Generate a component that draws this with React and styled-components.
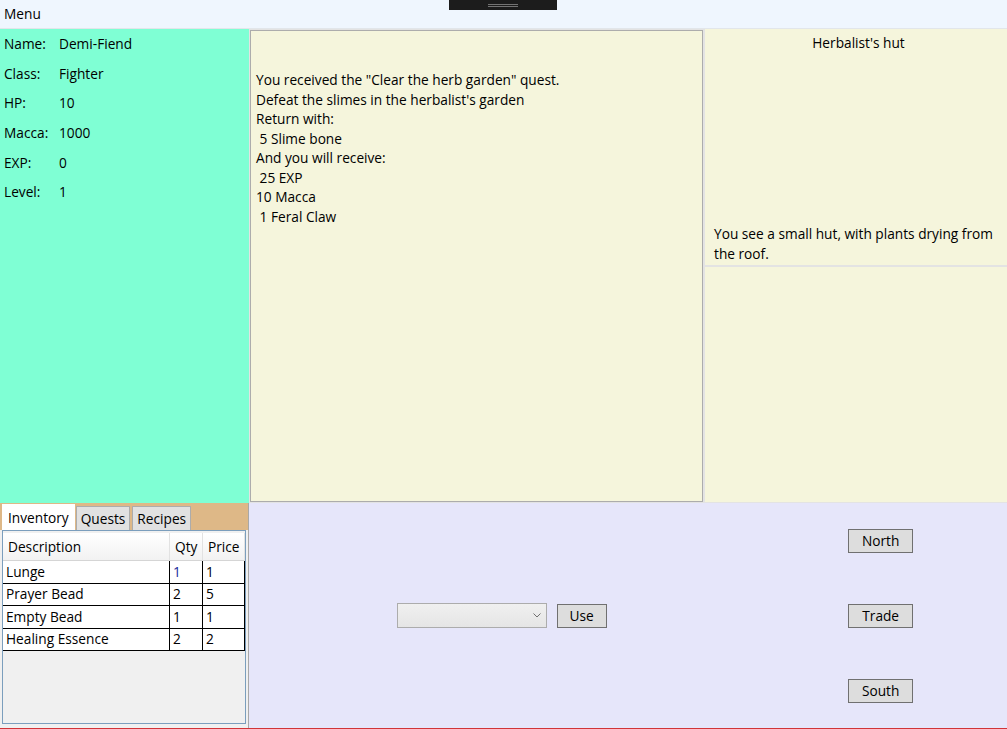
import React from "react";
import styled, { createGlobalStyle } from "styled-components";

const Global = createGlobalStyle`
  html, body { margin: 0; padding: 0; }
  body {
    font-family: "Open Sans", "Noto Sans", sans-serif;
    font-size: 13.7px;
    color: #000;
    background: #fff;
  }
  * { box-sizing: border-box; }
`;

const Window = styled.div`
  position: relative;
  width: 1007px;
  height: 729px;
  display: grid;
  grid-template-rows: 29px 474px 1fr;
  border-bottom: 1px solid #d13438;
  overflow: hidden;
`;

const Handle = styled.div`
  position: absolute;
  left: 449px;
  top: 0;
  width: 108px;
  height: 10px;
  background: #1c1c1c;
  display: flex;
  flex-direction: column;
  align-items: center;
  justify-content: center;
  gap: 1px;
  padding-top: 1px;
`;

const HandleLine = styled.div`
  width: 30px;
  height: 1px;
  background: #737373;
`;

const MenuBar = styled.div`
  background: #eff6fe;
  border-bottom: 1px solid #e2e6ea;
  padding: 4px 4px 0;
  line-height: 20px;
`;

const Main = styled.div`
  display: grid;
  grid-template-columns: 249px 456px 1fr;
  background: #e3e3e3;
`;

const StatsPanel = styled.div`
  background: #7fffd4;
  display: grid;
  grid-template-columns: 55px 1fr;
  grid-auto-rows: 29.6px;
  align-items: center;
  padding-left: 4px;
  align-content: start;
`;

const QuestPanel = styled.div`
  margin: 1px 2px 1px 1px;
  border: 1px solid #acacac;
  background: #f5f5dc;
  padding: 39px 5px 0;
  white-space: pre;
  line-height: 19.5px;
`;

const RightColumn = styled.div`
  display: grid;
  grid-template-rows: 236px 1fr;
  gap: 2px;
  padding-bottom: 1px;
`;

const LocationPanel = styled.div`
  background: #f5f5dc;
  display: flex;
  flex-direction: column;
  justify-content: space-between;
  padding: 4px 4px 2px 9px;
  line-height: 19.5px;
`;

const LocationTitle = styled.div`
  text-align: center;
`;

const EmptyPanel = styled.div`
  background: #f5f5dc;
`;

const Bottom = styled.div`
  display: grid;
  grid-template-columns: 249px 1fr;
`;

const TabArea = styled.div`
  display: flex;
  flex-direction: column;
  background: #f0f0f0;
  border-right: 1px solid #a8a8a8;
`;

const TabStrip = styled.div`
  height: 27px;
  background: #deb887;
  display: flex;
  align-items: flex-end;
  padding-left: 2px;
`;

const Tab = styled.div`
  height: ${(p) => (p.$active ? "26px" : "24px")};
  padding: 0 ${(p) => (p.$active ? "5px" : "4px")};
  margin-right: ${(p) => (p.$active ? "1px" : "2px")};
  background: ${(p) => (p.$active ? "#ffffff" : "#e1e1e1")};
  border: 1px solid ${(p) => (p.$active ? "#ffffff" : "#acacac")};
  border-bottom: none;
  display: flex;
  align-items: center;
  line-height: 20px;
`;

const TabContent = styled.div`
  flex: 1;
  margin: 0 2px 4px 2px;
  border: 1px solid #7b9ebd;
  background: #f0f0f0;
  padding: 2px 0 0 0;
`;

const Grid = styled.div`
  display: grid;
  grid-template-columns: 167px 33px 42px;
`;

const HeadCell = styled.div`
  height: 28px;
  display: flex;
  align-items: center;
  padding-left: 5px;
  background: linear-gradient(#ffffff, #f2f2f2);
  border-right: 1px solid #e2e2e2;
  border-bottom: 1px solid #d5d5d5;
`;

const Cell = styled.div`
  height: 22.5px;
  display: flex;
  align-items: center;
  padding-left: 3px;
  background: #fff;
  border-bottom: 1px solid #000;
  border-right: 1px solid #000;
  color: ${(p) => p.$color || "#000"};
  line-height: 20px;
`;

const Controls = styled.div`
  background: #e6e6fa;
  display: grid;
  grid-template-columns: repeat(3, 1fr);
  grid-template-rows: repeat(3, 1fr);
  align-items: center;
  justify-items: center;
`;

const ItemRow = styled.div`
  grid-column: 1 / span 2;
  grid-row: 2;
  display: flex;
  align-items: center;
  gap: 10px;
`;

const Combo = styled.div`
  width: 150px;
  height: 25px;
  border: 1px solid #acacac;
  background: linear-gradient(#f0f0f0, #e5e5e5);
  display: flex;
  align-items: center;
  justify-content: flex-end;
  padding-right: 5px;
`;

const Button = styled.button`
  font: inherit;
  color: #000;
  width: ${(p) => p.$w || "65px"};
  height: 24px;
  padding: 0;
  border: 1px solid #707070;
  background: #dddddd;
  line-height: 20px;
  grid-column: ${(p) => p.$col || "auto"};
  grid-row: ${(p) => p.$row || "auto"};
`;

const rows = [
  ["Lunge", "1", "1"],
  ["Prayer Bead", "2", "5"],
  ["Empty Bead", "1", "1"],
  ["Healing Essence", "2", "2"],
];

const stats = [
  ["Name:", "Demi-Fiend"],
  ["Class:", "Fighter"],
  ["HP:", "10"],
  ["Macca:", "1000"],
  ["EXP:", "0"],
  ["Level:", "1"],
];

const questText = `You received the "Clear the herb garden" quest.
Defeat the slimes in the herbalist's garden
Return with:
 5 Slime bone
And you will receive:
 25 EXP
10 Macca
 1 Feral Claw`;

export default function App() {
  return (
    <>
      <Global />
      <Window>
        <MenuBar>Menu</MenuBar>
        <Main>
          <StatsPanel>
            {stats.map(([k, v]) => (
              <React.Fragment key={k}>
                <span>{k}</span>
                <span>{v}</span>
              </React.Fragment>
            ))}
          </StatsPanel>
          <QuestPanel>{questText}</QuestPanel>
          <RightColumn>
            <LocationPanel>
              <LocationTitle>Herbalist's hut</LocationTitle>
              <div>You see a small hut, with plants drying from the roof.</div>
            </LocationPanel>
            <EmptyPanel />
          </RightColumn>
        </Main>
        <Bottom>
          <TabArea>
            <TabStrip>
              <Tab $active>Inventory</Tab>
              <Tab>Quests</Tab>
              <Tab>Recipes</Tab>
            </TabStrip>
            <TabContent>
              <Grid>
                <HeadCell>Description</HeadCell>
                <HeadCell>Qty</HeadCell>
                <HeadCell>Price</HeadCell>
                {rows.map(([d, q, p], i) => (
                  <React.Fragment key={d}>
                    <Cell>{d}</Cell>
                    <Cell $color={i === 0 ? "#1a2a9a" : undefined}>{q}</Cell>
                    <Cell>{p}</Cell>
                  </React.Fragment>
                ))}
              </Grid>
            </TabContent>
          </TabArea>
          <Controls>
            <Button $col="3" $row="1">North</Button>
            <ItemRow>
              <Combo>
                <svg width="8" height="5" viewBox="0 0 8 5">
                  <path d="M0.5 0.5 L4 4 L7.5 0.5" fill="none" stroke="#707070" strokeWidth="1" />
                </svg>
              </Combo>
              <Button $w="50px">Use</Button>
            </ItemRow>
            <Button $col="3" $row="2">Trade</Button>
            <Button $col="3" $row="3">South</Button>
          </Controls>
        </Bottom>
        <Handle>
          <HandleLine />
          <HandleLine />
        </Handle>
      </Window>
    </>
  );
}
